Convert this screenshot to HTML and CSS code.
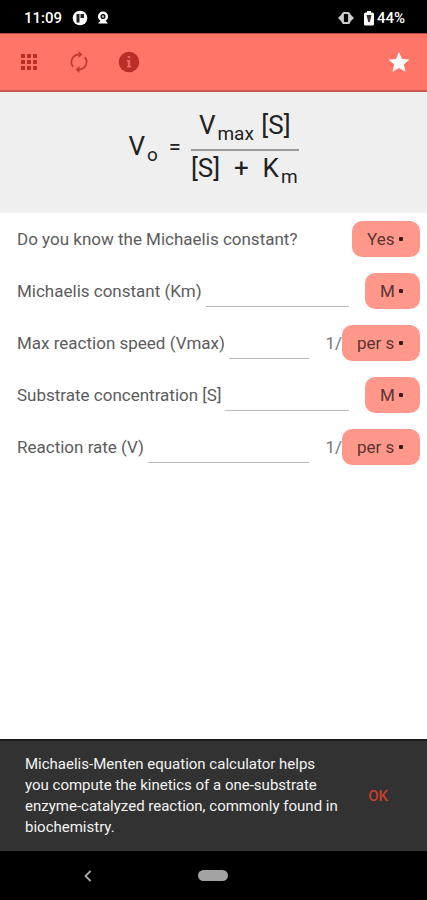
FILE: index.html
```html
<!DOCTYPE html>
<html lang="en">
<head>
    <meta charset="UTF-8">
    <meta name="viewport" content="width=device-width, initial-scale=1.0">
    <title>Michaelis-Menten equation</title>
    <link rel="stylesheet" href="styles.css">
</head>
<body>
    <div class="status-bar">
        <span class="clock">11:09</span>
        <svg width="16" height="16" viewBox="0 0 16 16">
            <circle cx="8" cy="8" r="7.300" fill="#fff"/>
            <path d="M4.500 4h3v8.500h-3z M8.500 4H12v4H8.500z" fill="#222"/>
        </svg>
        <svg class="camera" width="12" height="16" viewBox="0 0 12 16">
            <circle cx="6" cy="6.500" r="3.800" fill="none" stroke="#fff" stroke-width="2.600"/>
            <circle cx="6" cy="6.500" r="1.200" fill="#bbb"/>
            <path d="M3.500 10.500h5l2.500 3H1z" fill="#fff"/>
        </svg>
        <svg class="vibrate" width="16" height="16" viewBox="0 0 16 16">
            <path d="M0 8l4-4v8z M16 8l-4-4v8z" fill="#ccc"/>
            <rect x="4.800" y="3" width="6.400" height="10" rx="1.500" fill="none" stroke="#ccc" stroke-width="2.200"/>
        </svg>
        <svg width="10" height="16" viewBox="0 0 10 16">
            <path d="M3 1h4v1.500h1.500A1.500 1.500 0 0 1 10 4v10a1.500 1.500 0 0 1-1.500 1.500h-7A1.500 1.500 0 0 1 0 14V4a1.500 1.500 0 0 1 1.500-1.500H3z" fill="#fff"/>
            <path d="M2.500 5h5L5.800 12H4.300z" fill="#333"/>
        </svg>
        <span class="battery">44%</span>
    </div>

    <header class="toolbar">
        <button type="button" aria-label="Menu">
            <svg width="22" height="22" viewBox="0 0 22 22" fill="#b92f27">
                <path d="M3 3h4v4H3z M9 3h4v4H9z M15 3h4v4h-4z M3 9h4v4H3z M9 9h4v4H9z M15 9h4v4h-4z M3 15h4v4H3z M9 15h4v4H9z M15 15h4v4h-4z"/>
            </svg>
        </button>
        <button type="button" aria-label="Reset">
            <svg width="22" height="22" viewBox="0 0 22 22">
                <path d="M5.200 15.800A7.500 7.500 0 0 1 11 3.500 M16.800 6.200A7.500 7.500 0 0 1 11 18.500" fill="none" stroke="#c23c32" stroke-width="1.800"/>
                <path d="M10.500 0l4 3.500-4 3.500z M11.500 15l-4 3.500 4 3.500z" fill="#c23c32"/>
            </svg>
        </button>
        <button type="button" aria-label="Info">
            <svg width="22" height="22" viewBox="0 0 22 22">
                <circle cx="11" cy="11" r="10.300" fill="#b92f27"/>
                <path d="M9.800 5h2.400v2.300H9.800z M8.800 9h3.400v6h1v1.500H8.800V15h1v-4.500h-1z" fill="#e8695d"/>
            </svg>
        </button>
        <button type="button" class="favorite" aria-label="Favorite">
            <svg width="22" height="22" viewBox="0 0 22 22">
                <path d="M11 1l3 6.900 7.500.7-5.700 4.900 1.700 7.300L11 17l-6.500 3.800 1.700-7.300L.5 8.600 8 7.900z" fill="#fff"/>
            </svg>
        </button>
    </header>

    <section class="formula">
        <div>V<sub>o</sub></div>
        <div class="equals">=</div>
        <div class="fraction">
            <div class="numerator">V<sub>max</sub> [S]</div>
            <div class="denominator"><span>[S]</span><span>+</span><span>K<sub>m</sub></span></div>
        </div>
    </section>

    <form class="fields">
        <div class="row">
            <label for="known">Do you know the Michaelis constant?</label>
            <div class="picker last">
                <select id="known"><option>Yes</option></select>
            </div>
        </div>
        <div class="row">
            <label for="km">Michaelis constant (Km)</label>
            <input type="text" id="km" inputmode="decimal">
            <div class="picker">
                <select aria-label="Michaelis constant unit"><option>M</option></select>
            </div>
        </div>
        <div class="row">
            <label for="vmax">Max reaction speed (Vmax)</label>
            <input type="text" id="vmax" inputmode="decimal">
            <span class="prefix">1/</span>
            <div class="picker">
                <select aria-label="Max reaction speed unit"><option>per s</option></select>
            </div>
        </div>
        <div class="row">
            <label for="substrate">Substrate concentration [S]</label>
            <input type="text" id="substrate" inputmode="decimal">
            <div class="picker">
                <select aria-label="Substrate concentration unit"><option>M</option></select>
            </div>
        </div>
        <div class="row">
            <label for="rate">Reaction rate (V)</label>
            <input type="text" id="rate" inputmode="decimal">
            <span class="prefix">1/</span>
            <div class="picker">
                <select aria-label="Reaction rate unit"><option>per s</option></select>
            </div>
        </div>
    </form>

    <div class="snackbar">
        <p>Michaelis-Menten equation calculator helps you compute the kinetics of a one-substrate enzyme-catalyzed reaction, commonly found in biochemistry.</p>
        <button type="button">OK</button>
    </div>

    <nav class="nav-bar">
        <button type="button" aria-label="Back">
            <svg width="8" height="12" viewBox="0 0 8 12">
                <path d="M6.500 1L1.500 6l5 5" fill="none" stroke="#aaa" stroke-width="1.800"/>
            </svg>
        </button>
        <button type="button" class="home" aria-label="Home"></button>
    </nav>
</body>
</html>
```
FILE: styles.css
```css
* {
    box-sizing: border-box;
}
body {
    margin: 0;
    min-height: 100vh;
    display: flex;
    flex-direction: column;
    background-color: #fff;
    color: #5c5c5c;
    font-family: Roboto, sans-serif;
    font-size: 17px;
}
button {
    padding: 0;
    border: none;
    background: none;
    font-family: inherit;
    cursor: pointer;
}
svg {
    display: block;
}

/* Status bar */
.status-bar {
    display: flex;
    align-items: center;
    height: 33px;
    padding: 2px 22px 0 24px;
    background-color: #000;
    color: #fff;
    font-size: 15px;
    font-weight: 500;
}
.clock {
    margin-right: 10px;
}
.camera {
    margin-left: 9px;
}
.vibrate {
    margin-left: auto;
    margin-right: 10px;
}
.battery {
    margin-left: 3px;
}

/* Toolbar */
.toolbar {
    display: flex;
    align-items: center;
    gap: 28px;
    height: 59px;
    padding: 0 17px 0 18px;
    background-color: #ff7668;
    border-top: 1px solid #b8483e;
    border-bottom: 2px solid #c9574d;
}
.favorite {
    margin-left: auto;
}

/* Formula */
.formula {
    display: flex;
    justify-content: center;
    align-items: center;
    gap: 10px;
    height: 121px;
    padding-bottom: 12px;
    background-color: #efefef;
    color: #222;
    font-size: 26px;
    line-height: 34px;
}
.formula sub {
    margin: 0 1px 0 2px;
    font-size: 19px;
    line-height: 1;
    vertical-align: -6px;
}
.equals {
    font-size: 22px;
}
.numerator {
    padding: 0 8px 6px;
    border-bottom: 2px solid #999;
}
.denominator {
    display: flex;
    justify-content: space-between;
}

/* Fields */
.fields {
    flex: 1;
    display: flex;
    flex-direction: column;
    gap: 16px;
    padding: 8px 7px 16px 17px;
}
.row {
    display: flex;
    align-items: center;
    height: 36px;
}
.row input {
    flex: 1;
    min-width: 0;
    height: 34px;
    align-self: flex-start;
    margin: 0 16px 0 4px;
    padding: 0;
    border: none;
    border-bottom: 1px solid #bbb;
    background: none;
    color: #333;
    font: inherit;
    outline: none;
}
.prefix {
    color: #777;
}
.picker {
    position: relative;
}
.picker.last {
    margin-left: auto;
}
.picker select {
    display: block;
    height: 36px;
    padding: 0 25px 0 15px;
    border: none;
    border-radius: 10px;
    background-color: #ff978b;
    color: #5a3430;
    font: inherit;
    appearance: none;
}
.picker::after {
    content: "";
    position: absolute;
    top: 16px;
    right: 17px;
    width: 4px;
    height: 4px;
    border-radius: 1px;
    background-color: #3a1a18;
    pointer-events: none;
}

/* Snackbar */
.snackbar {
    display: flex;
    align-items: center;
    justify-content: space-between;
    padding: 13px 39px 13px 25px;
    border-top: 2px solid #1c1c1c;
    background-color: #323232;
    color: #f2f2f2;
    font-size: 15px;
    line-height: 21px;
}
.snackbar p {
    margin: 0;
    max-width: 316px;
}
.snackbar button {
    color: #c8402f;
    font-size: 15px;
    font-weight: 500;
}

/* Navigation bar */
.nav-bar {
    display: grid;
    grid-template-columns: repeat(3, 1fr);
    align-items: center;
    justify-items: center;
    height: 49px;
    padding: 0 25px;
    background-color: #000;
}
.home {
    width: 30px;
    height: 11px;
    border-radius: 6px;
    background-color: #a3a3a3;
}
```
